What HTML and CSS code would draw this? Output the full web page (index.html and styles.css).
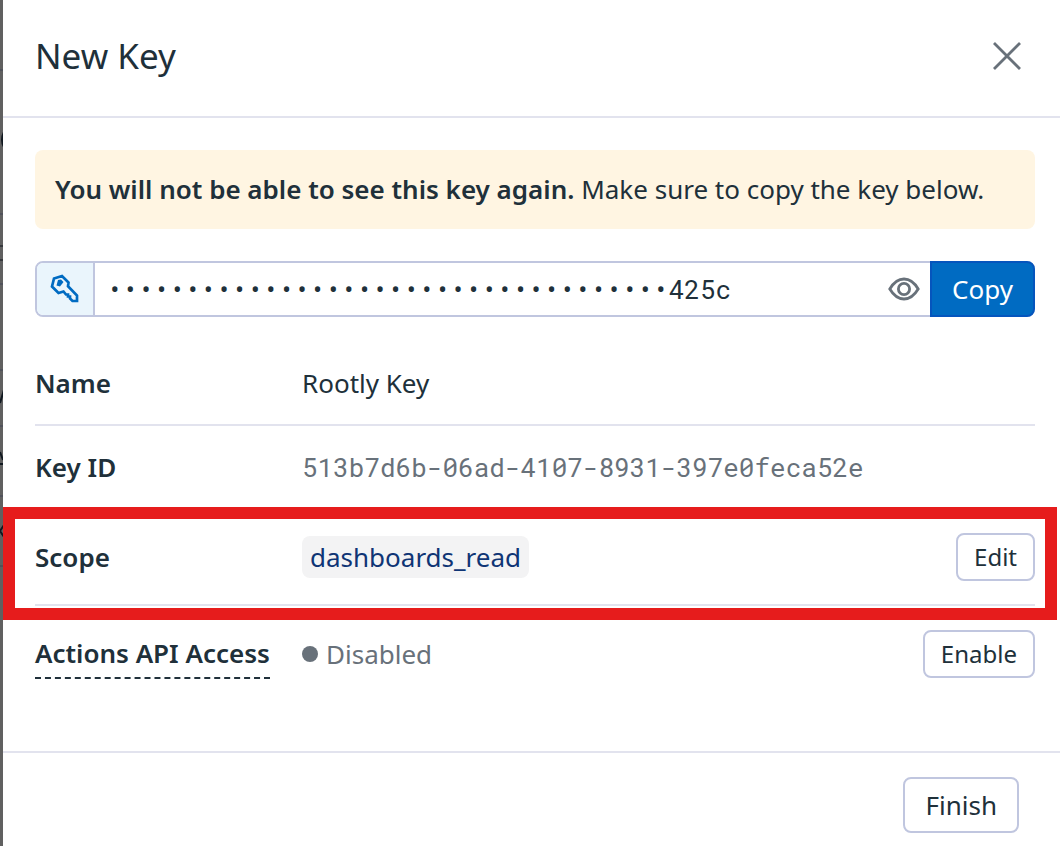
FILE: index.html
```html
<!DOCTYPE html>
<html lang="en">
<head>
<meta charset="UTF-8">
<meta name="viewport" content="width=device-width, initial-scale=1.0">
<title>New Key</title>
<link rel="stylesheet" href="styles.css">
</head>
<body>

<!-- edge of the dimmed page behind the panel -->
<div class="backdrop" aria-hidden="true">
  <svg width="3" height="600" viewBox="0 0 3 600" fill="none">
    <path d="M0 70h3M0 214h3M0 284h3M0 370h3M0 426h3M0 496h3M0 566h3" stroke="#50525a" stroke-width="2"/>
    <path d="M0 246h3M0 260h3" stroke="#36383c" stroke-width="2"/>
    <path d="M0 464h3" stroke="#101820" stroke-width="2"/>
    <path d="M4 132q-4 8 0 15M0 403l4-13M0 452l3 8M4 525l-4 6 4 6" stroke="#101820" stroke-width="2"/>
  </svg>
</div>

<main class="panel">
  <header class="panel-header">
    <h1>New Key</h1>
    <button class="close-btn" aria-label="Close">
      <svg width="30" height="30" viewBox="0 0 30 30" fill="none" stroke="currentColor" stroke-width="2.8">
        <path d="M2 2l26 26M28 2L2 28"/>
      </svg>
    </button>
  </header>

  <section class="panel-body">
    <p class="alert"><strong>You will not be able to see this key again.</strong> Make sure to copy the key below.</p>

    <div class="key-field">
      <label class="key-icon" for="key" aria-label="Key">
        <svg width="30" height="30" viewBox="0 0 30 30" fill="none" stroke="currentColor" stroke-width="2.7">
          <path d="M12 2L4 4.500 2 12.500l6.500 6.500 5-1.500 2.500 3h2v2h2v2l2.500 2.500H27V21.500l-9-9.300 .5-3.700z"/>
          <path d="M8 6l3-.5 2.500 2.500-3.500 4.500-3.500-1z" fill="currentColor" stroke="none"/>
        </svg>
      </label>
      <input class="key-input" id="key" type="text" value="••••••••••••••••••••••••••••••••••••425c" readonly>
      <button class="eye-btn" aria-label="Show key">
        <svg width="32" height="24" viewBox="0 0 32 24" fill="none" stroke="currentColor" stroke-width="2.8">
          <path d="M1.800 12C6 5 10.500 2 16 2s10 3 14.200 10c-4.200 7-8.700 10-14.200 10S6 19 1.800 12z"/>
          <circle cx="16" cy="12" r="5.600"/>
        </svg>
      </button>
      <button class="copy-btn">Copy</button>
    </div>

    <dl class="details">
      <div class="row">
        <dt>Name</dt>
        <dd>Rootly Key</dd>
      </div>
      <div class="row">
        <dt>Key ID</dt>
        <dd class="key-id">513b7d6b-06ad-4107-8931-397e0feca52e</dd>
      </div>
      <div class="row row-tall highlight">
        <dt>Scope</dt>
        <dd><span class="tag">dashboards_read</span><button class="btn">Edit</button></dd>
      </div>
      <div class="row row-tall">
        <dt><span class="hint">Actions API Access</span></dt>
        <dd><span class="status">Disabled</span><button class="btn">Enable</button></dd>
      </div>
    </dl>
  </section>

  <footer class="panel-footer">
    <button class="btn btn-large">Finish</button>
  </footer>
</main>

</body>
</html>
```

FILE: styles.css
```css
* {
  box-sizing: border-box;
}
body {
  margin: 0;
  display: flex;
  min-height: 100vh;
  background-color: #fff;
  color: #20303a;
  font-family: "Noto Sans", sans-serif;
  font-size: 26px;
  line-height: 36px;
}
button {
  font: inherit;
  color: inherit;
  cursor: pointer;
}
svg {
  display: block;
}
.backdrop {
  width: 3px;
  background-color: #606060;
}
.panel {
  flex: 1;
  min-width: 0;
}
.panel-header {
  display: flex;
  justify-content: space-between;
  align-items: center;
  padding: 32px 38px 36px 32px;
  border-bottom: 2px solid #e2e3ee;
}
h1 {
  margin: 0;
  font-size: 35px;
  font-weight: 400;
  line-height: 48px;
}
.close-btn {
  padding: 0;
  border: none;
  background: none;
  color: #68717a;
}
.panel-body {
  padding: 32px 25px 49px 32px;
}
.alert {
  margin: 0 0 32px;
  padding: 21px 20px 22px;
  border-radius: 8px;
  background-color: #fff5e2;
}
strong,
dt {
  font-weight: 600;
}
.key-field {
  display: flex;
  height: 56px;
  margin-bottom: 25px;
  border: 2px solid #c0c6df;
  border-radius: 8px;
}
.key-icon {
  display: flex;
  align-items: center;
  justify-content: center;
  width: 58px;
  border-right: 2px solid #c0c6df;
  border-radius: 6px 0 0 6px;
  background-color: #eaf5fc;
  color: #006bc2;
}
.key-input {
  flex: 1;
  min-width: 0;
  padding: 0 12px;
  border: none;
  background: none;
  color: inherit;
  font-family: "Roboto Mono", "Liberation Mono", monospace;
  font-size: 26px;
}
.eye-btn {
  padding: 0 10px;
  border: none;
  background: none;
  color: #68717a;
}
.copy-btn {
  margin: -2px;
  margin-left: 0;
  padding: 0 20px;
  border: 2px solid #0555bd;
  border-radius: 0 8px 8px 0;
  background-color: #006bc2;
  color: #fff;
}
.details {
  margin: 0;
}
.row {
  position: relative;
  display: flex;
  align-items: center;
  height: 84px;
  border-bottom: 2px solid #e2e3ee;
}
.row-tall {
  height: 96px;
}
.row:last-child {
  border-bottom: none;
}
dt {
  width: 267px;
}
dd {
  flex: 1;
  display: flex;
  align-items: center;
  justify-content: space-between;
  margin: 0;
}
.key-id {
  color: #68717a;
  font-family: "Roboto Mono", "Liberation Mono", monospace;
}
/* red frame around the scope row */
.highlight::after {
  content: "";
  position: absolute;
  inset: -3px -22px -16px -32px;
  border: 12px solid #e61c1c;
  pointer-events: none;
}
.tag {
  padding: 3px 8px;
  border-radius: 8px;
  background-color: #f3f3f4;
  color: #0f3575;
}
.hint {
  display: inline-block;
  padding: 6px 0;
  border-bottom: 2px dashed #20303a;
}
.status {
  display: flex;
  align-items: center;
  gap: 8px;
  color: #68717a;
}
.status::before {
  content: "";
  width: 16px;
  height: 16px;
  border-radius: 50%;
  background-color: #68717a;
}
.btn {
  height: 48px;
  padding: 0 16px;
  border: 2px solid #c0c6df;
  border-radius: 8px;
  background-color: #fff;
  font-size: 24px;
}
.btn-large {
  height: 56px;
  padding: 0 20px;
  font-size: 26px;
}
.panel-footer {
  display: flex;
  justify-content: flex-end;
  padding: 24px 41px 13px;
  border-top: 2px solid #e2e3ee;
}
```
